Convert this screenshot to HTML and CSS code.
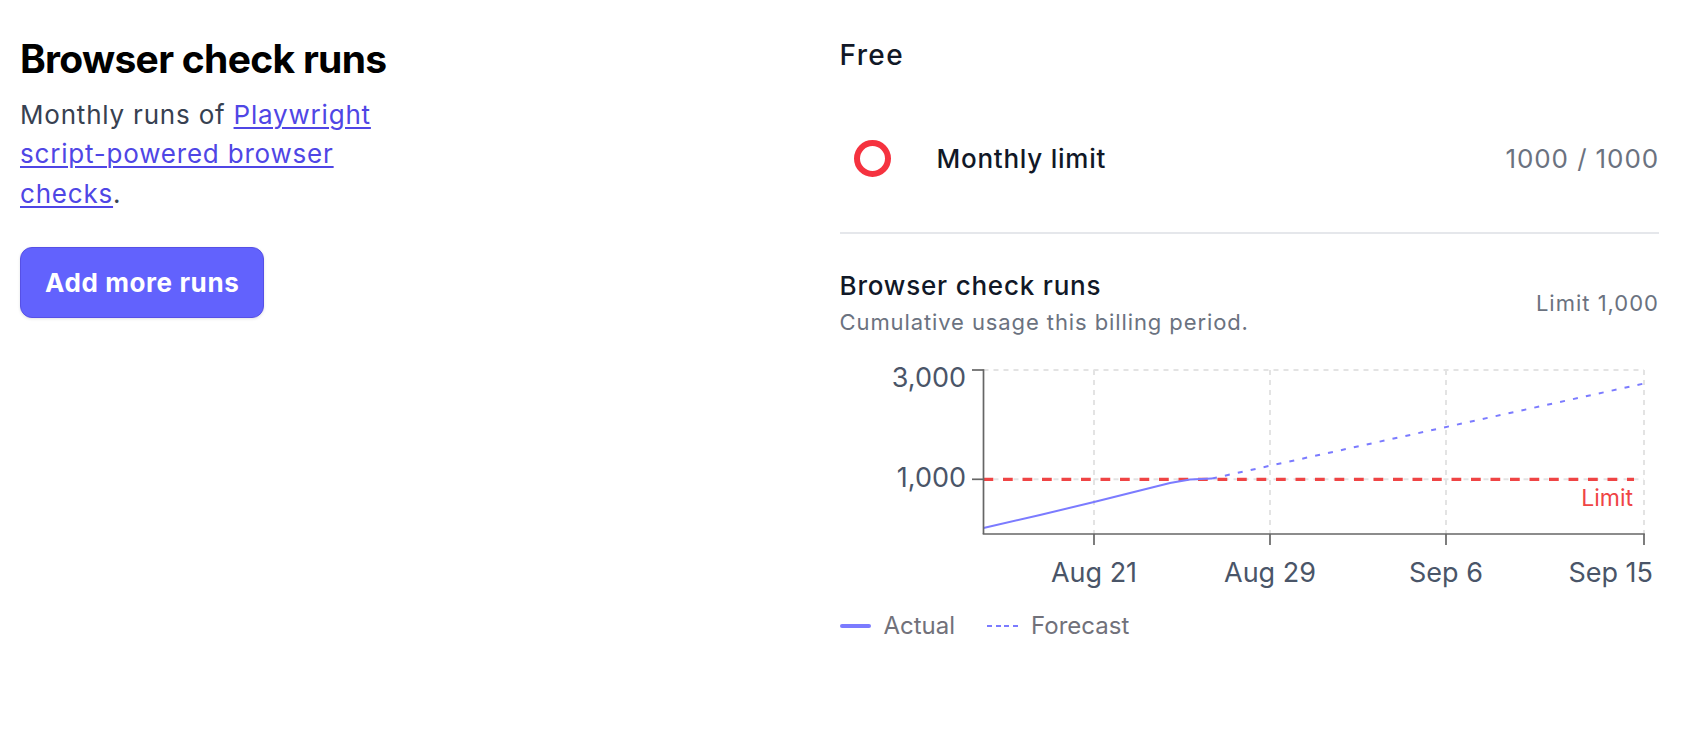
FILE: index.html
```html
<!DOCTYPE html>
<html lang="en">
<head>
<meta charset="utf-8">
<title>Browser check runs</title>
<link rel="stylesheet" href="styles.css">
</head>
<body>
<main class="page">
  <section class="intro">
    <h1 class="intro-title">Browser check runs</h1>
    <p class="intro-text">Monthly runs of <a class="intro-link" href="#">Playwright script-powered browser checks</a>.</p>
    <button class="btn-primary" type="button">Add more runs</button>
  </section>

  <section class="usage">
    <h2 class="plan-name">Free</h2>

    <div class="limit-row">
      <span class="limit-icon">
        <svg width="37" height="37" viewBox="0 0 37 37"><circle cx="18.5" cy="18.5" r="15.5" fill="none" stroke="#f5323f" stroke-width="6"/></svg>
      </span>
      <span class="limit-label">Monthly limit</span>
      <span class="limit-value">1000 / 1000</span>
    </div>

    <div class="chart-head">
      <div class="chart-titles">
        <h3 class="chart-title">Browser check runs</h3>
        <p class="chart-sub">Cumulative usage this billing period.</p>
      </div>
      <span class="chart-limit">Limit 1,000</span>
    </div>

    <svg class="chart" width="819" height="255" viewBox="0 0 819 255">
      <!-- grid -->
      <g stroke="#e3e3e3" stroke-width="2" stroke-dasharray="5 5" fill="none">
        <line x1="143.5" y1="25" x2="804" y2="25"/>
        <line x1="143.5" y1="134.3" x2="804" y2="134.3"/>
        <line x1="254" y1="25" x2="254" y2="189"/>
        <line x1="430" y1="25" x2="430" y2="189"/>
        <line x1="606" y1="25" x2="606" y2="189"/>
        <line x1="804" y1="25" x2="804" y2="189"/>
      </g>

      <!-- limit reference -->
      <line x1="143.5" y1="134.3" x2="794" y2="134.3" stroke="#ef4444" stroke-width="3.2" stroke-dasharray="9.75 9.75"/>
      <text class="limit-text" x="793" y="161" text-anchor="end">Limit</text>

      <!-- usage series -->
      <polyline points="143.5,183 200,170 254,157 300,145.5 330,138 350,134.6 372,133.5" fill="none" stroke="#7b7bff" stroke-width="2"/>
      <line x1="372" y1="133.5" x2="804" y2="38.5" stroke="#7b7bff" stroke-width="2" stroke-dasharray="5 8.2"/>

      <!-- axes -->
      <g stroke="#666666" stroke-width="1.7" fill="none">
        <line x1="143.5" y1="24.2" x2="143.5" y2="189"/>
        <line x1="132" y1="25" x2="143.5" y2="25"/>
        <line x1="132" y1="134.3" x2="143.5" y2="134.3"/>
        <line x1="142.7" y1="189" x2="804.8" y2="189"/>
        <line x1="254" y1="189" x2="254" y2="200"/>
        <line x1="430" y1="189" x2="430" y2="200"/>
        <line x1="606" y1="189" x2="606" y2="200"/>
        <line x1="804" y1="189" x2="804" y2="200"/>
      </g>

      <g class="tick-text">
        <text x="126" y="41.7" text-anchor="end">3,000</text>
        <text x="126" y="141.7" text-anchor="end">1,000</text>
        <text x="254" y="236.7" text-anchor="middle">Aug 21</text>
        <text x="430" y="236.7" text-anchor="middle">Aug 29</text>
        <text x="606" y="236.7" text-anchor="middle">Sep 6</text>
        <text x="813" y="236.7" text-anchor="end">Sep 15</text>
      </g>
    </svg>

    <div class="legend">
      <span class="legend-item"><span class="swatch swatch-solid"></span>Actual</span>
      <span class="legend-item"><span class="swatch swatch-dashed"></span>Forecast</span>
    </div>
  </section>
</main>
</body>
</html>
```

FILE: styles.css
```css
* {
  box-sizing: border-box;
}

html, body {
  margin: 0;
  background: #ffffff;
}

body {
  font-family: Inter, "Noto Sans", "Liberation Sans", sans-serif;
  color: #111827;
}

.page {
  display: grid;
  grid-template-columns: 1fr 1fr;
  padding: 33px 39px 0 20px;
}

/* left column */
.intro {
  max-width: 385px;
}

.intro-title {
  margin: 0;
  font-size: 39px;
  line-height: 52px;
  font-weight: 700;
  letter-spacing: -0.7px;
  color: #000000;
}

.intro-text {
  margin: 10px 0 0;
  font-size: 26px;
  line-height: 39.3px;
  letter-spacing: 0.8px;
  color: #374151;
}

.intro-link {
  color: #4f46e5;
  text-decoration: underline;
  text-underline-offset: 3px;
  text-decoration-thickness: 2px;
}

.btn-primary {
  margin-top: 34px;
  padding: 15px 24px;
  border: 1px solid #5650e6;
  border-radius: 12px;
  background: #6262fd;
  color: #ffffff;
  font-family: inherit;
  font-size: 26px;
  line-height: 39px;
  font-weight: 700;
  letter-spacing: 0.6px;
  box-shadow: 0 1px 3px rgba(17, 24, 39, 0.12);
  cursor: pointer;
}

/* right column */
.usage {
  display: flex;
  flex-direction: column;
}

.plan-name {
  margin: 0;
  font-size: 28px;
  line-height: 44px;
  font-weight: 500;
  letter-spacing: 1.4px;
  color: #111827;
}

.limit-row {
  display: flex;
  align-items: center;
  height: 64px;
  margin-top: 49px;
  box-sizing: content-box;
  padding-bottom: 42px;
  border-bottom: 2px solid #e5e7eb;
}

.limit-icon {
  display: flex;
  width: 37px;
  height: 37px;
  margin-left: 14px;
}

.limit-label {
  margin-left: 46px;
  font-size: 26px;
  font-weight: 500;
  letter-spacing: 0.75px;
  color: #111827;
}

.limit-value {
  margin-left: auto;
  font-size: 26px;
  letter-spacing: 0.9px;
  color: #6b7280;
}

.chart-head {
  display: flex;
  align-items: center;
  justify-content: space-between;
  margin-top: 32px;
}

.chart-title {
  margin: 0;
  font-size: 26px;
  line-height: 39px;
  font-weight: 500;
  letter-spacing: 0.8px;
  color: #111827;
}

.chart-sub {
  margin: 0;
  font-size: 22px;
  line-height: 34px;
  letter-spacing: 0.9px;
  color: #6b7280;
}

.chart-limit {
  font-size: 22px;
  line-height: 34px;
  letter-spacing: 1px;
  color: #6b7280;
}

.chart {
  display: block;
  margin-top: 6px;
  overflow: visible;
}

.tick-text text {
  font-family: Inter, "Noto Sans", sans-serif;
  font-size: 27px;
  fill: #4a5568;
}

.limit-text {
  font-family: Inter, "Noto Sans", sans-serif;
  font-size: 23px;
  fill: #ef4444;
}

.legend {
  display: flex;
  align-items: center;
  gap: 32px;
  margin-top: 9px;
  font-size: 24px;
  line-height: 34px;
  color: #71717a;
}

.legend-item {
  display: inline-flex;
  align-items: center;
  gap: 13px;
}

.swatch {
  display: inline-block;
  width: 31px;
}

.swatch-solid {
  height: 4px;
  border-radius: 2px;
  background: #7b7bff;
}

.swatch-dashed {
  height: 2px;
  background: repeating-linear-gradient(90deg, #7b7bff 0 5px, transparent 5px 8.5px);
}
```
